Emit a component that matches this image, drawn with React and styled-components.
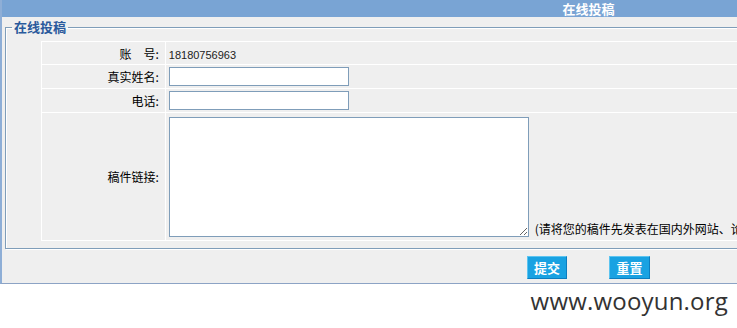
import React from "react";
import styled, { createGlobalStyle } from "styled-components";

const GlobalStyle = createGlobalStyle`
  html, body { margin: 0; padding: 0; background: #ffffff; }
  body {
    font-family: "Noto Sans CJK SC", "Liberation Sans", sans-serif;
    font-size: 12px;
    color: #000;
    overflow: hidden;
  }
`;

const Viewport = styled.div`
  width: 737px;
  overflow: hidden;
`;

const Frame = styled.div`
  width: 1175px;
  box-sizing: border-box;
  background: #efefef;
  border-left: 2px solid #8eaed6;
  border-bottom: 1px solid #8ca3c5;
`;

const Header = styled.div`
  height: 17px;
  background: #79a4d4;
  color: #fff;
  font-weight: bold;
  font-size: 13px;
  line-height: 17px;
  text-align: center;
`;

const Fieldset = styled.fieldset`
  margin: 2px 5px 0 3px;
  padding: 6px 6px 7px 6px;
  border: 1px solid #7f9db9;
  box-shadow: inset 1px 1px 0 #fff, 1px 1px 0 #fff;
  min-width: 0;
`;

const Legend = styled.legend`
  padding: 0 2px;
  margin-left: 0;
  font-size: 13px;
  line-height: 16px;
  font-weight: bold;
  color: #2a5a9c;
`;

const Table = styled.table`
  width: 95%;
  margin: 0 auto;
  border-collapse: collapse;
  border: 1px solid #fff;
`;

const Label = styled.td`
  width: 117px;
  height: ${(p) => p.$h}px;
  padding: 0 6px 0 0;
  border: 1px solid #fff;
  text-align: right;
  vertical-align: middle;
  white-space: nowrap;
`;

const Value = styled.td`
  height: ${(p) => p.$h}px;
  padding: ${(p) => (p.$tall ? "4px 3px 3px 3px" : "0 3px")};
  border: 1px solid #fff;
  vertical-align: ${(p) => (p.$tall ? "bottom" : "middle")};
  white-space: nowrap;
`;

const Number = styled.span`
  font-family: "Liberation Sans", sans-serif;
  font-size: 11px;
  color: #222;
`;

const TextInput = styled.input`
  display: block;
  box-sizing: border-box;
  width: 180px;
  height: 19px;
  margin: 0;
  padding: 1px 3px;
  border: 1px solid #7f9db9;
  background: #fff;
  font-size: 12px;
`;

const TextArea = styled.textarea`
  box-sizing: border-box;
  width: 360px;
  height: 120px;
  margin: 0;
  padding: 2px;
  border: 1px solid #7f9db9;
  background: #fff;
  vertical-align: bottom;
  font-size: 12px;
`;

const Hint = styled.span`
  margin-left: 6px;
  font-size: 12px;
  line-height: 16px;
  color: #000;
`;

const ButtonBar = styled.div`
  height: 34px;
  box-sizing: border-box;
  padding-top: 7px;
  display: flex;
  justify-content: center;
  gap: 42px;
`;

const Button = styled.button`
  width: ${(p) => p.$w}px;
  height: 23px;
  padding: 0;
  margin: 0;
  background: #19a2e2;
  border: 1px solid #0c7dbf;
  border-top-color: #5cc4f0;
  border-left-color: #5cc4f0;
  color: #fff;
  font-family: "Noto Sans CJK SC", sans-serif;
  font-size: 13px;
  font-weight: bold;
  line-height: 21px;
  cursor: pointer;
`;

const Watermark = styled.div`
  margin-top: 1px;
  padding-right: 9px;
  text-align: right;
  font-family: "Open Sans", "Liberation Sans", sans-serif;
  font-size: 24px;
  letter-spacing: 0.2px;
  line-height: 32px;
  color: #333;
`;

export default function App() {
  return (
    <Viewport>
      <GlobalStyle />
      <Frame>
        <Header>在线投稿</Header>
        <Fieldset>
          <Legend>在线投稿</Legend>
          <Table>
            <tbody>
              <tr>
                <Label $h={22}>账　号:</Label>
                <Value $h={22}>
                  <Number>18180756963</Number>
                </Value>
              </tr>
              <tr>
                <Label $h={23}>真实姓名:</Label>
                <Value $h={23}>
                  <TextInput type="text" />
                </Value>
              </tr>
              <tr>
                <Label $h={23}>电话:</Label>
                <Value $h={23}>
                  <TextInput type="text" />
                </Value>
              </tr>
              <tr>
                <Label $h={127}>稿件链接:</Label>
                <Value $h={120} $tall>
                  <TextArea />
                  <Hint>(请将您的稿件先发表在国内外网站、论坛或博客上，然后将链接地址填写在此处)</Hint>
                </Value>
              </tr>
            </tbody>
          </Table>
        </Fieldset>
        <ButtonBar>
          <Button $w={40}>提交</Button>
          <Button $w={41}>重置</Button>
        </ButtonBar>
      </Frame>
      <Watermark>www.wooyun.org</Watermark>
    </Viewport>
  );
}
